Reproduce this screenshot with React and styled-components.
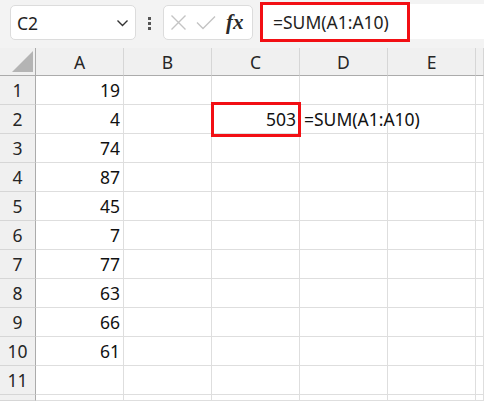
import React from 'react';
import styled, { createGlobalStyle } from 'styled-components';

const Global = createGlobalStyle`
  html, body {
    margin: 0;
    padding: 0;
    background: #ffffff;
  }
  body {
    font-family: "Noto Sans", "Open Sans", sans-serif;
  }
`;

const Sheet = styled.div`
  width: 484px;
  height: 401px;
  overflow: hidden;
  background: #ffffff;
`;

const Toolbar = styled.div`
  height: 48px;
  box-sizing: border-box;
  padding: 5px 0 0 10px;
  background: #f3f3f3;
  display: flex;
  align-items: flex-start;
`;

const NameBox = styled.div`
  width: 126px;
  height: 35px;
  box-sizing: border-box;
  border: 1px solid #dcdcdc;
  border-radius: 5px;
  background: #ffffff;
  display: flex;
  align-items: center;
  justify-content: space-between;
  padding: 0 6px 0 6px;
  font-size: 17.5px;
  color: #1f1f1f;
`;

const Dots = styled.div`
  width: 3px;
  margin: 12px 12px 0 12px;
  display: flex;
  flex-direction: column;
  gap: 2px;

  span {
    display: block;
    width: 3px;
    height: 3px;
    background: #555555;
  }
`;

const FxBox = styled.div`
  width: 90px;
  height: 35px;
  box-sizing: border-box;
  border: 1px solid #dcdcdc;
  border-radius: 5px;
  background: #ffffff;
  display: flex;
  align-items: center;
  padding: 0 6px 0 6px;
  gap: 9px;
`;

const Fx = styled.span`
  font-family: "Liberation Serif", "DejaVu Serif", serif;
  font-style: italic;
  font-weight: bold;
  font-size: 21px;
  color: #2a2a2a;
  margin-left: 1px;
`;

const FormulaBar = styled.div`
  position: relative;
  flex: 1;
  height: 35px;
  margin: -1px 0 0 7px;
  background: #ffffff;
  display: flex;
  align-items: center;
  padding-left: 13px;
  font-size: 17.5px;
  color: #1f1f1f;
`;

const Mark = styled.div`
  position: absolute;
  left: 0;
  top: ${p => p.$top}px;
  width: ${p => p.$w}px;
  height: ${p => p.$h}px;
  box-sizing: border-box;
  border: 3px solid #f20f14;
  pointer-events: none;
`;

const Grid = styled.div`
  display: grid;
  grid-template-columns: 36px repeat(5, 88px) 1fr;
  grid-template-rows: 28px repeat(11, 29px) 1fr;
  height: 353px;
  font-size: 17.5px;
`;

const Corner = styled.div`
  background: #f0f0f0;
  border-right: 1px solid #ababab;
  border-bottom: 1px solid #ababab;
  display: flex;
  align-items: flex-end;
  justify-content: flex-end;
  padding: 0 2px 3px 0;
`;

const ColHead = styled.div`
  background: #f0f0f0;
  border-right: 1px solid #d6d6d6;
  border-bottom: 1px solid #ababab;
  display: flex;
  align-items: center;
  justify-content: center;
  color: #262626;
`;

const RowHead = styled.div`
  background: #f0f0f0;
  border-right: 1px solid #ababab;
  border-bottom: 1px solid #d6d6d6;
  display: flex;
  align-items: center;
  justify-content: center;
  color: #262626;
`;

const Cell = styled.div`
  position: relative;
  border-right: 1px solid #dedede;
  border-bottom: 1px solid #dedede;
  display: flex;
  align-items: center;
  justify-content: ${p => (p.$text ? 'flex-start' : 'flex-end')};
  padding: ${p => (p.$text ? '0 0 0 4px' : '0 3px 0 0')};
  white-space: nowrap;
  overflow: visible;
  color: #111111;
`;

const CellMark = styled.div`
  position: absolute;
  left: -1px;
  top: -3px;
  width: 90px;
  height: 35px;
  box-sizing: border-box;
  border: 3px solid #f20f14;
  z-index: 2;
`;

const Chevron = () => (
  <svg width="13" height="8" viewBox="0 0 13 8">
    <path d="M1.5 1.5 L6.5 6.5 L11.5 1.5" fill="none" stroke="#333" strokeWidth="1.4" />
  </svg>
);

const CancelIcon = () => (
  <svg width="17" height="17" viewBox="0 0 17 17">
    <path d="M1.5 1.5 L15.5 15.5 M15.5 1.5 L1.5 15.5" stroke="#c4c4c4" strokeWidth="1.4" />
  </svg>
);

const CheckIcon = () => (
  <svg width="20" height="15" viewBox="0 0 20 15">
    <path d="M1 7.5 L7 13.5 L19 1.5" fill="none" stroke="#c4c4c4" strokeWidth="1.4" />
  </svg>
);

const SelectAll = () => (
  <svg width="21" height="21" viewBox="0 0 21 21">
    <polygon points="21,0 21,21 0,21" fill="#b4b4b4" />
  </svg>
);

const cols = ['A', 'B', 'C', 'D', 'E', ''];
const values = [19, 4, 74, 87, 45, 7, 77, 63, 66, 61];

export default function App() {
  const rows = [];
  for (let r = 1; r <= 12; r++) {
    rows.push(<RowHead key={'h' + r}>{r <= 11 ? r : ''}</RowHead>);
    cols.forEach((c, i) => {
      let content = null;
      let text = false;
      let mark = false;
      if (c === 'A' && values[r - 1] !== undefined) content = values[r - 1];
      if (c === 'C' && r === 2) {
        content = 503;
        mark = true;
      }
      if (c === 'D' && r === 2) {
        content = '=SUM(A1:A10)';
        text = true;
      }
      rows.push(
        <Cell key={r + '-' + i} $text={text}>
          {content}
          {mark && <CellMark />}
        </Cell>
      );
    });
  }

  return (
    <Sheet>
      <Global />
      <Toolbar>
        <NameBox>
          <span>C2</span>
          <Chevron />
        </NameBox>
        <Dots>
          <span />
          <span />
          <span />
        </Dots>
        <FxBox>
          <CancelIcon />
          <CheckIcon />
          <Fx>fx</Fx>
        </FxBox>
        <FormulaBar>
          =SUM(A1:A10)
          <Mark $top={-2} $w={150} $h={40} />
        </FormulaBar>
      </Toolbar>
      <Grid>
        <Corner>
          <SelectAll />
        </Corner>
        {cols.map((c, i) => (
          <ColHead key={'c' + i}>{c}</ColHead>
        ))}
        {rows}
      </Grid>
    </Sheet>
  );
}
